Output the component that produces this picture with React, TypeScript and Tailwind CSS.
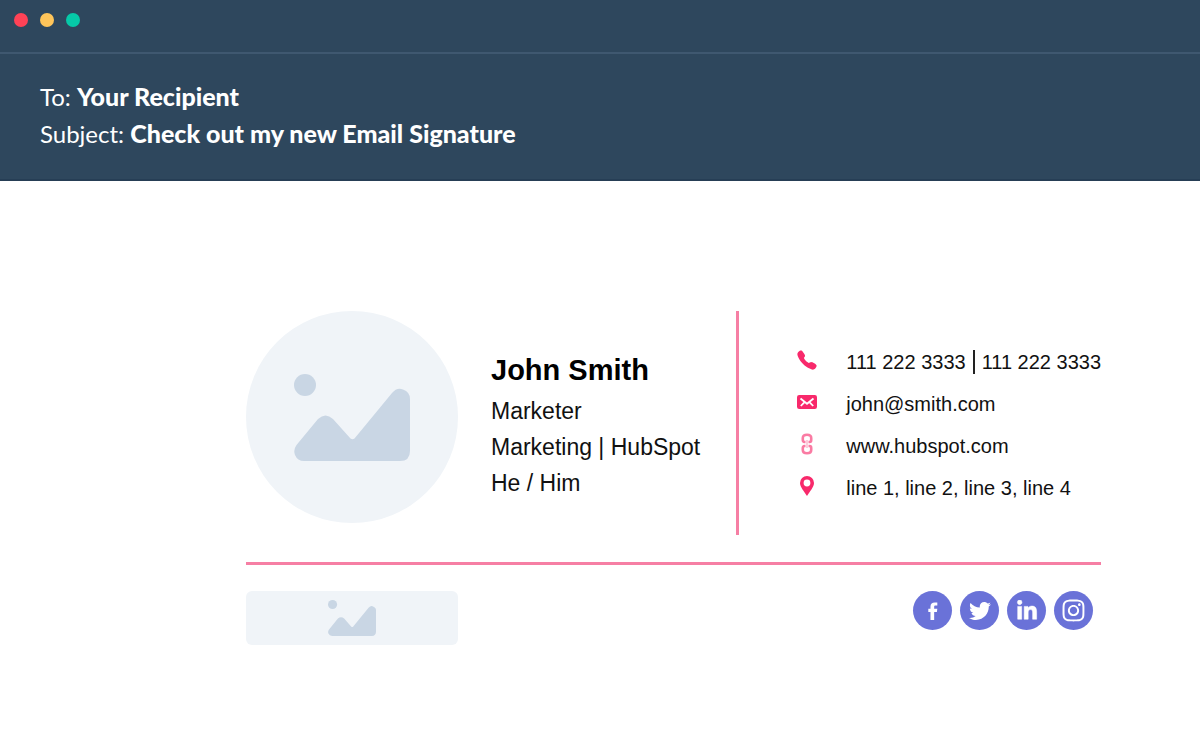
import type { ReactNode } from "react";
import { FaInstagram, FaLinkedinIn, FaTwitter } from "react-icons/fa";
import { IoCall } from "react-icons/io5";

function Placeholder({ className }: { className: string }) {
  return (
    <svg viewBox="0 0 116 87" className={className} fill="currentColor" aria-hidden="true">
      <circle cx="11" cy="11" r="11" />
      <path d="M2.500 71L24 45Q31.500 38 39 45L56.500 64.500Q58.500 66 60.500 64.500L98 19Q103 13 109 15.500Q116 18 116 25V77Q116 87 106 87H10Q3.500 87 1 81Q-1 76 2.500 71Z" />
    </svg>
  );
}

function MailIcon() {
  return (
    <svg viewBox="0 0 20 14" className="h-3.5 w-5" aria-hidden="true">
      <rect width="20" height="14" rx="2.2" fill="#f8296b" />
      <path d="M3.500 3.500L10 8.800L16.500 3.500M3.800 11L7.300 7.300M16.200 11L12.700 7.300" fill="none" stroke="#fff" strokeWidth="1.8" />
    </svg>
  );
}

function LinkIcon() {
  return (
    <svg viewBox="0 0 12 22" className="h-5.5 w-3" fill="none" stroke="#fa7ba3" strokeWidth="2.6" aria-hidden="true">
      <path d="M4.500 9H3.500Q1.800 9 1.800 7V5Q1.800 1.800 6 1.800T10.200 5V7Q10.200 9 8.500 9H7.500" />
      <path d="M4.500 13H3.500Q1.800 13 1.800 15V17Q1.800 20.200 6 20.200T10.200 17V15Q10.200 13 8.500 13H7.500" />
      <path d="M6 7V15" strokeWidth="1.6" strokeOpacity="0.5" />
    </svg>
  );
}

function PinIcon() {
  return (
    <svg viewBox="0 0 14 20" className="h-5 w-3.5" aria-hidden="true">
      <path fillRule="evenodd" fill="#f8296b" d="M7 0A7 7 0 0 1 14 7C14 11 10 15 7 20C4 15 0 11 0 7A7 7 0 0 1 7 0ZM7 3.600A3.400 3.400 0 1 0 7 10.400A3.400 3.400 0 1 0 7 3.600Z" />
    </svg>
  );
}

function FacebookIcon() {
  return (
    <svg viewBox="0 0 12 20" className="h-[18px] w-3" fill="currentColor" aria-hidden="true">
      <path d="M3.200 20V11H0.800V7.500H3.200V5.200C3.200 2 5 0.600 8 0.600H10.800V4H9C7.700 4 7.300 4.500 7.300 5.600V7.500H10.800L10.300 11H7.300V20Z" />
    </svg>
  );
}

function Contact({ icon, children }: { icon: ReactNode; children: ReactNode }) {
  return (
    <li className="flex h-[42px] items-center">
      <span className="flex w-[22px] shrink-0 justify-center pb-1">{icon}</span>
      <span className="ml-7 flex items-center whitespace-nowrap">{children}</span>
    </li>
  );
}

const socials = [
  { name: "Facebook", icon: <FacebookIcon /> },
  { name: "Twitter", icon: <FaTwitter className="size-[22px]" /> },
  { name: "LinkedIn", icon: <FaLinkedinIn className="size-[22px]" stroke="currentColor" strokeWidth="12" /> },
  { name: "Instagram", icon: <FaInstagram className="size-[25px]" /> },
];

export default function App() {
  return (
    <div className="min-h-screen bg-white font-['Liberation_Sans',Arial,sans-serif] text-[#111]">
      <header className="border-b-2 border-[#263e55] bg-[#2e475d] font-['Lato',sans-serif] text-white">
        <div className="flex gap-3 border-b-2 border-[#3f5870] px-3.5 pt-[13px] pb-[25px]">
          <span className="size-3.5 rounded-full bg-[#ff4256]" />
          <span className="size-3.5 rounded-full bg-[#fec55a]" />
          <span className="size-3.5 rounded-full bg-[#06c9a8]" />
        </div>
        <div className="px-10 pt-6 pb-[27px] text-[24px] leading-[37px]">
          <p>To: <strong className="text-[25px] leading-9 font-black">Your Recipient</strong></p>
          <p>Subject: <strong className="text-[25px] leading-9 font-black">Check out my new Email Signature</strong></p>
        </div>
      </header>
      <main className="flex justify-center pt-[130px] pr-[99px] pb-20 pl-[246px]">
        <div className="w-full max-w-[855px]">
          <section className="flex">
            <div className="flex size-[212px] shrink-0 items-center justify-center rounded-full bg-[#f0f4f8]">
              <Placeholder className="w-[116px] text-[#c9d6e4]" />
            </div>
            <div className="ml-[33px] pt-[39px] text-[23px] leading-9 whitespace-nowrap">
              <h1 className="mb-[3px] text-[29px] leading-10 font-bold text-black">John Smith</h1>
              <p>Marketer</p>
              <p>Marketing | HubSpot</p>
              <p>He / Him</p>
            </div>
            <ul className="ml-auto flex h-56 flex-col border-l-3 border-[#f67fa4] pt-[30px] pl-[57px] text-[20px]">
              <Contact icon={<IoCall className="size-6 text-[#f8296b]" />}>
                <a href="tel:1112223333">111 222 3333</a>
                <span className="mx-[7px] h-6 w-0.5 bg-[#222]" />
                <a href="tel:1112223333">111 222 3333</a>
              </Contact>
              <Contact icon={<MailIcon />}><a href="mailto:john@smith.com">john@smith.com</a></Contact>
              <Contact icon={<LinkIcon />}><a href="https://www.hubspot.com">www.hubspot.com</a></Contact>
              <Contact icon={<PinIcon />}>line 1, line 2, line 3, line 4</Contact>
            </ul>
          </section>
          <hr className="mt-[27px] border-0 border-t-3 border-[#f67fa4]" />
          <footer className="flex items-start justify-between pt-[26px]">
            <div className="flex h-[54px] w-[212px] items-center justify-center rounded-md bg-[#f0f4f8]">
              <Placeholder className="w-12 text-[#c9d6e4]" />
            </div>
            <nav className="flex gap-2 pr-2">
              {socials.map((s) => (
                <a key={s.name} href="#" aria-label={s.name} className="flex size-[39px] items-center justify-center rounded-full bg-[#6a72d8] text-white">
                  {s.icon}
                </a>
              ))}
            </nav>
          </footer>
        </div>
      </main>
    </div>
  );
}
